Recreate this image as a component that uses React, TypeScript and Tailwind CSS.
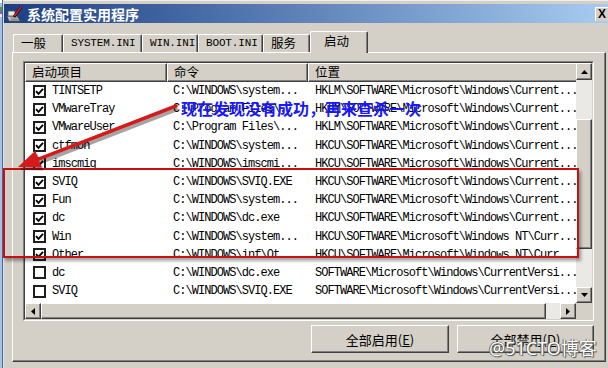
import React from "react";

type Row = { name: string; cmd: string; loc: string; checked: boolean };

const HKLM = "HKLM\\SOFTWARE\\Microsoft\\Windows\\Current...";
const HKCU = "HKCU\\SOFTWARE\\Microsoft\\Windows\\Current...";
const HKNT = "HKCU\\SOFTWARE\\Microsoft\\Windows NT\\Curr...";
const SW = "SOFTWARE\\Microsoft\\Windows\\CurrentVersi...";

const rows: Row[] = [
  { name: "TINTSETP", cmd: "C:\\WINDOWS\\system...", loc: HKLM, checked: true },
  { name: "VMwareTray", cmd: "C:\\Program Files\\...", loc: HKLM, checked: true },
  { name: "VMwareUser", cmd: "C:\\Program Files\\...", loc: HKLM, checked: true },
  { name: "ctfmon", cmd: "C:\\WINDOWS\\system...", loc: HKCU, checked: true },
  { name: "imscmig", cmd: "C:\\WINDOWS\\imscmi...", loc: HKCU, checked: true },
  { name: "SVIQ", cmd: "C:\\WINDOWS\\SVIQ.EXE", loc: HKCU, checked: true },
  { name: "Fun", cmd: "C:\\WINDOWS\\system...", loc: HKCU, checked: true },
  { name: "dc", cmd: "C:\\WINDOWS\\dc.exe", loc: HKCU, checked: true },
  { name: "Win", cmd: "C:\\WINDOWS\\system...", loc: HKNT, checked: true },
  { name: "Other", cmd: "C:\\WINDOWS\\inf\\Ot...", loc: HKNT, checked: true },
  { name: "dc", cmd: "C:\\WINDOWS\\dc.exe", loc: SW, checked: false },
  { name: "SVIQ", cmd: "C:\\WINDOWS\\SVIQ.EXE", loc: SW, checked: false },
];

const MONO = "font-['Liberation_Mono',monospace] text-[12px] tracking-[-0.95px] text-black whitespace-nowrap";
const CJK = "font-['Noto_Sans_CJK_SC',sans-serif]";
const RAISED =
  "bg-[#d4d0c8] border border-t-white border-l-white border-r-[#404040] border-b-[#404040] shadow-[inset_-1px_-1px_0_#808080]";

function Check({ checked }: { checked: boolean }) {
  return (
    <div className="w-[13px] h-[13px] shrink-0 border-2 border-[#1e1e1e] bg-white flex items-center justify-center">
      {checked && (
        <svg width="9" height="9" viewBox="0 0 9 9">
          <path d="M1 4.2 L3.5 6.8 L8 1.8" stroke="#000" strokeWidth="1.9" fill="none" />
        </svg>
      )}
    </div>
  );
}

function Arrow({ dir }: { dir: "up" | "down" | "left" | "right" }) {
  const pts =
    dir === "up"
      ? "0,4 7,4 3.5,0"
      : dir === "down"
      ? "0,0 7,0 3.5,4"
      : dir === "left"
      ? "4,0 4,7 0,3.5"
      : "0,0 0,7 4,3.5";
  const w = dir === "up" || dir === "down" ? 7 : 4;
  const h = dir === "up" || dir === "down" ? 4 : 7;
  return (
    <svg width={w} height={h} viewBox={`0 0 ${w} ${h}`}>
      <polygon points={pts} fill="#000" />
    </svg>
  );
}

function Tab({ label, w, mono }: { label: string; w: string; mono?: boolean }) {
  return (
    <div
      className={`${w} h-[18px] shrink-0 flex items-center pl-[7px] border-t border-l border-r border-t-white border-l-white border-r-[#404040] shadow-[inset_-1px_0_0_#808080] rounded-t-[2px] ${
        mono
          ? "font-['Liberation_Mono',monospace] text-[11px] tracking-[-0.15px]"
          : `${CJK} text-[12.5px]`
      } text-black leading-none`}
    >
      {label}
    </div>
  );
}

export default function App() {
  return (
    <div className="relative w-[608px] h-[368px] overflow-hidden flex bg-[#d4d0c8]">
      {/* desktop sliver */}
      <div className="w-[4px] shrink-0 flex">
        <div className="w-[2px] flex flex-col bg-[#a9c1e2]">
          <div className="h-[3px] bg-white" />
          <div className="h-[4px] mt-[4px] bg-[#4d9a4d]" />
          <div className="h-[3px] bg-[#9a5ab0]" />
          <div className="h-[3px] bg-[#e8e8f0]" />
        </div>
        <div className="w-[1px] bg-[#3e6aa8]" />
        <div className="w-[1px] bg-[#e4e2dc]" />
      </div>

      {/* window */}
      <div className="flex-1 flex flex-col pt-[3px] border-t border-t-[#eeeeee]">
        {/* title bar */}
        <div className="h-[19px] shrink-0 flex items-center bg-gradient-to-r from-[#1e3f82] to-[#a8ccf0]">
          <svg width="17" height="16" viewBox="0 0 17 16" className="ml-[2px] shrink-0">
            <polygon points="1,10 11,10 14,15 3,15" fill="#c8c8c8" stroke="#505050" strokeWidth="0.8" />
            <line x1="4" y1="12" x2="11" y2="12" stroke="#707070" strokeWidth="0.8" />
            <line x1="5" y1="13.6" x2="12" y2="13.6" stroke="#707070" strokeWidth="0.8" />
            <rect x="2" y="5" width="7" height="5" fill="#e8e8e8" stroke="#505050" strokeWidth="0.8" />
            <line x1="8" y1="11" x2="15" y2="1" stroke="#101010" strokeWidth="3" />
            <line x1="8.5" y1="10" x2="15" y2="1" stroke="#e02020" strokeWidth="1.6" />
          </svg>
          <span className={`${CJK} ml-[4px] text-[14px] font-bold text-white leading-none`}>系统配置实用程序</span>
          <div className="ml-auto h-[14px] w-[13px] shrink-0 bg-[#d4d0c8] border-t border-l border-t-white border-l-white flex items-center pl-[2px] font-['Liberation_Sans',sans-serif] text-[12px] font-bold leading-none text-black">
            X
          </div>
        </div>

        {/* body */}
        <div className="flex-1 flex flex-col pl-[8px] pt-[8px]">
          {/* tabs */}
          <div className="h-[21px] flex items-end pl-[1px]">
            <Tab label="一般" w="w-[50px]" />
            <Tab label="SYSTEM.INI" w="w-[79px]" mono />
            <Tab label="WIN.INI" w="w-[56px]" mono />
            <Tab label="BOOT.INI" w="w-[65px]" mono />
            <Tab label="服务" w="w-[47px]" />
            <div
              className={`relative z-10 w-[58px] h-[22px] -mb-[1px] shrink-0 flex items-center pl-[13px] pb-[2px] bg-[#d4d0c8] border-t border-l border-r border-t-white border-l-white border-r-[#404040] shadow-[inset_-1px_0_0_#808080] rounded-t-[2px] ${CJK} text-[12.5px] text-black leading-none`}
            >
              启动
            </div>
          </div>

          {/* panel */}
          <div className="w-[594px] h-[310px] shrink-0 border border-t-white border-l-white border-r-[#404040] border-b-[#404040] shadow-[inset_-1px_-1px_0_#808080] pl-[10px] pt-[8px]">
            <div className="w-[571px] flex flex-col">
              {/* list view */}
              <div className="w-[571px] h-[260px] border border-t-[#808080] border-l-[#808080] border-r-white border-b-white">
                <div className="w-full h-full border border-t-[#404040] border-l-[#404040] border-r-[#d4d0c8] border-b-[#d4d0c8] flex flex-col">
                  <div className="flex h-[240px]">
                    <div className="w-[551px] h-[240px] bg-white overflow-hidden flex flex-col">
                      {/* header */}
                      <div className="flex h-[19px] shrink-0">
                        <div className={`${RAISED} w-[142px] shrink-0 flex items-center pl-[6px] ${CJK} text-[12.5px] leading-none text-black`}>
                          启动项目
                        </div>
                        <div className={`${RAISED} w-[141px] shrink-0 flex items-center pl-[6px] ${CJK} text-[12.5px] leading-none text-black`}>
                          命令
                        </div>
                        <div className={`${RAISED} w-[400px] shrink-0 flex items-center pl-[6px] ${CJK} text-[12.5px] leading-none text-black`}>
                          位置
                        </div>
                      </div>
                      {/* rows */}
                      {rows.map((r, i) => (
                        <div key={i} className="flex h-[18.2px] shrink-0 items-center">
                          <div className="w-[142px] shrink-0 flex items-center gap-[6px] pl-[8px]">
                            <Check checked={r.checked} />
                            <span className={MONO}>{r.name}</span>
                          </div>
                          <div className={`w-[141px] shrink-0 pl-[6px] ${MONO}`}>{r.cmd}</div>
                          <div className={`w-[400px] shrink-0 pl-[7px] ${MONO}`}>{r.loc}</div>
                        </div>
                      ))}
                    </div>
                    {/* vertical scrollbar */}
                    <div className="w-[16px] h-[240px] flex flex-col">
                      <div className={`${RAISED} h-[17px] shrink-0 flex items-center justify-center`}>
                        <Arrow dir="up" />
                      </div>
                      <div className="h-[39px] shrink-0 bg-[#ebe9e5]" />
                      <div className={`${RAISED} h-[130px] shrink-0`} />
                      <div className="h-[38px] shrink-0 bg-[#ebe9e5]" />
                      <div className={`${RAISED} h-[16px] shrink-0 flex items-center justify-center`}>
                        <Arrow dir="down" />
                      </div>
                    </div>
                  </div>
                  {/* horizontal scrollbar */}
                  <div className="flex h-[16px]">
                    <div className={`${RAISED} w-[16px] shrink-0 flex items-center justify-center`}>
                      <Arrow dir="left" />
                    </div>
                    <div className={`${RAISED} w-[505px] shrink-0`} />
                    <div className="w-[14px] shrink-0 bg-[#ebe9e5]" />
                    <div className={`${RAISED} w-[16px] shrink-0 flex items-center justify-center`}>
                      <Arrow dir="right" />
                    </div>
                    <div className="w-[16px] shrink-0 bg-[#d4d0c8]" />
                  </div>
                </div>
              </div>

              {/* buttons */}
              <div className="flex justify-end gap-[8px] mt-[4px]">
                <div className={`${RAISED} w-[138px] h-[28px] flex items-center justify-center ${CJK} text-[13px] text-black leading-none`}>
                  全部启用(<span className="underline">E</span>)
                </div>
                <div className={`${RAISED} w-[137px] h-[28px] flex items-center justify-center ${CJK} text-[13px] text-black leading-none`}>
                  全部禁用(<span className="underline">D</span>)
                </div>
              </div>
            </div>
          </div>
        </div>
      </div>

      {/* annotations */}
      <div className="absolute left-[3px] top-[168px] w-[576px] h-[90px] border-2 border-[#c81010] shadow-[2px_3px_3px_rgba(0,0,0,0.35)] pointer-events-none" />
      <svg className="absolute left-0 top-0 pointer-events-none" width="608" height="368" viewBox="0 0 608 368">
        <g opacity="0.35" transform="translate(2,3)">
          <line x1="176" y1="106" x2="38.5" y2="159.1" stroke="#000" strokeWidth="4" />
          <polygon points="18,167 41.7,167.5 35.3,150.7" fill="#000" />
        </g>
        <line x1="176" y1="106" x2="38.5" y2="159.1" stroke="#d41a1a" strokeWidth="3.5" strokeLinecap="round" />
        <polygon points="18,167 41.7,167.5 35.3,150.7" fill="#d41a1a" />
      </svg>
      <div className={`absolute left-[181px] top-[98px] ${CJK} text-[16px] leading-[20px] font-bold text-[#1818ff] whitespace-nowrap`}>
        现在发现没有成功，再来查杀一次
      </div>
      <div className="absolute left-[489px] top-[336px] font-['Noto_Sans',sans-serif] text-[18px] leading-[22px] text-white whitespace-nowrap [text-shadow:0_0_1px_#444,1px_1px_1px_#555,-1px_0_0_#777]">
        @51CTO<span className={CJK}>博客</span>
      </div>
    </div>
  );
}
